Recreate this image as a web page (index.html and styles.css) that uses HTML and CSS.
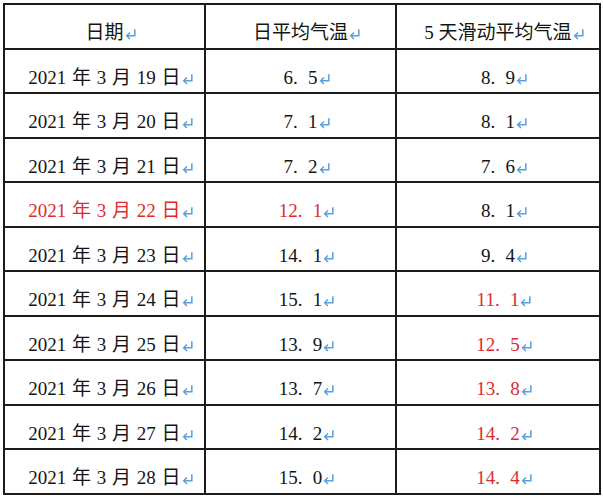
FILE: index.html
```html
<!DOCTYPE html>
<html lang="zh">
<head>
<meta charset="utf-8">
<link rel="stylesheet" href="styles.css">
</head>
<body>
<table class="data">
  <colgroup><col class="c1"><col class="c2"><col class="c3"></colgroup>
  <tr><td>日期<span class="mark"><svg viewBox="0 0 12 12"><path d="M10 2V8H2.5M5.5 5L2.5 8L5.5 11"/></svg></span></td><td>日平均气温<span class="mark"><svg viewBox="0 0 12 12"><path d="M10 2V8H2.5M5.5 5L2.5 8L5.5 11"/></svg></span></td><td>5 天滑动平均气温<span class="mark"><svg viewBox="0 0 12 12"><path d="M10 2V8H2.5M5.5 5L2.5 8L5.5 11"/></svg></span></td></tr>
  <tr><td class="date">2021 年 3 月 19 日<span class="mark"><svg viewBox="0 0 12 12"><path d="M10 2V8H2.5M5.5 5L2.5 8L5.5 11"/></svg></span></td><td>6<span class="pt">.</span>5<span class="mark"><svg viewBox="0 0 12 12"><path d="M10 2V8H2.5M5.5 5L2.5 8L5.5 11"/></svg></span></td><td>8<span class="pt">.</span>9<span class="mark"><svg viewBox="0 0 12 12"><path d="M10 2V8H2.5M5.5 5L2.5 8L5.5 11"/></svg></span></td></tr>
  <tr><td class="date">2021 年 3 月 20 日<span class="mark"><svg viewBox="0 0 12 12"><path d="M10 2V8H2.5M5.5 5L2.5 8L5.5 11"/></svg></span></td><td>7<span class="pt">.</span>1<span class="mark"><svg viewBox="0 0 12 12"><path d="M10 2V8H2.5M5.5 5L2.5 8L5.5 11"/></svg></span></td><td>8<span class="pt">.</span>1<span class="mark"><svg viewBox="0 0 12 12"><path d="M10 2V8H2.5M5.5 5L2.5 8L5.5 11"/></svg></span></td></tr>
  <tr><td class="date">2021 年 3 月 21 日<span class="mark"><svg viewBox="0 0 12 12"><path d="M10 2V8H2.5M5.5 5L2.5 8L5.5 11"/></svg></span></td><td>7<span class="pt">.</span>2<span class="mark"><svg viewBox="0 0 12 12"><path d="M10 2V8H2.5M5.5 5L2.5 8L5.5 11"/></svg></span></td><td>7<span class="pt">.</span>6<span class="mark"><svg viewBox="0 0 12 12"><path d="M10 2V8H2.5M5.5 5L2.5 8L5.5 11"/></svg></span></td></tr>
  <tr><td class="date red">2021 年 3 月 22 日<span class="mark"><svg viewBox="0 0 12 12"><path d="M10 2V8H2.5M5.5 5L2.5 8L5.5 11"/></svg></span></td><td class="red">12<span class="pt">.</span>1<span class="mark"><svg viewBox="0 0 12 12"><path d="M10 2V8H2.5M5.5 5L2.5 8L5.5 11"/></svg></span></td><td>8<span class="pt">.</span>1<span class="mark"><svg viewBox="0 0 12 12"><path d="M10 2V8H2.5M5.5 5L2.5 8L5.5 11"/></svg></span></td></tr>
  <tr><td class="date">2021 年 3 月 23 日<span class="mark"><svg viewBox="0 0 12 12"><path d="M10 2V8H2.5M5.5 5L2.5 8L5.5 11"/></svg></span></td><td>14<span class="pt">.</span>1<span class="mark"><svg viewBox="0 0 12 12"><path d="M10 2V8H2.5M5.5 5L2.5 8L5.5 11"/></svg></span></td><td>9<span class="pt">.</span>4<span class="mark"><svg viewBox="0 0 12 12"><path d="M10 2V8H2.5M5.5 5L2.5 8L5.5 11"/></svg></span></td></tr>
  <tr><td class="date">2021 年 3 月 24 日<span class="mark"><svg viewBox="0 0 12 12"><path d="M10 2V8H2.5M5.5 5L2.5 8L5.5 11"/></svg></span></td><td>15<span class="pt">.</span>1<span class="mark"><svg viewBox="0 0 12 12"><path d="M10 2V8H2.5M5.5 5L2.5 8L5.5 11"/></svg></span></td><td class="red">11<span class="pt">.</span>1<span class="mark"><svg viewBox="0 0 12 12"><path d="M10 2V8H2.5M5.5 5L2.5 8L5.5 11"/></svg></span></td></tr>
  <tr><td class="date">2021 年 3 月 25 日<span class="mark"><svg viewBox="0 0 12 12"><path d="M10 2V8H2.5M5.5 5L2.5 8L5.5 11"/></svg></span></td><td>13<span class="pt">.</span>9<span class="mark"><svg viewBox="0 0 12 12"><path d="M10 2V8H2.5M5.5 5L2.5 8L5.5 11"/></svg></span></td><td class="red">12<span class="pt">.</span>5<span class="mark"><svg viewBox="0 0 12 12"><path d="M10 2V8H2.5M5.5 5L2.5 8L5.5 11"/></svg></span></td></tr>
  <tr><td class="date">2021 年 3 月 26 日<span class="mark"><svg viewBox="0 0 12 12"><path d="M10 2V8H2.5M5.5 5L2.5 8L5.5 11"/></svg></span></td><td>13<span class="pt">.</span>7<span class="mark"><svg viewBox="0 0 12 12"><path d="M10 2V8H2.5M5.5 5L2.5 8L5.5 11"/></svg></span></td><td class="red">13<span class="pt">.</span>8<span class="mark"><svg viewBox="0 0 12 12"><path d="M10 2V8H2.5M5.5 5L2.5 8L5.5 11"/></svg></span></td></tr>
  <tr><td class="date">2021 年 3 月 27 日<span class="mark"><svg viewBox="0 0 12 12"><path d="M10 2V8H2.5M5.5 5L2.5 8L5.5 11"/></svg></span></td><td>14<span class="pt">.</span>2<span class="mark"><svg viewBox="0 0 12 12"><path d="M10 2V8H2.5M5.5 5L2.5 8L5.5 11"/></svg></span></td><td class="red">14<span class="pt">.</span>2<span class="mark"><svg viewBox="0 0 12 12"><path d="M10 2V8H2.5M5.5 5L2.5 8L5.5 11"/></svg></span></td></tr>
  <tr><td class="date">2021 年 3 月 28 日<span class="mark"><svg viewBox="0 0 12 12"><path d="M10 2V8H2.5M5.5 5L2.5 8L5.5 11"/></svg></span></td><td>15<span class="pt">.</span>0<span class="mark"><svg viewBox="0 0 12 12"><path d="M10 2V8H2.5M5.5 5L2.5 8L5.5 11"/></svg></span></td><td class="red">14<span class="pt">.</span>4<span class="mark"><svg viewBox="0 0 12 12"><path d="M10 2V8H2.5M5.5 5L2.5 8L5.5 11"/></svg></span></td></tr>
</table>
</body>
</html>
```
FILE: styles.css
```css
html, body {
  margin: 0;
  padding: 0;
  background: #ffffff;
}
body {
  padding: 3px 0 0 3px;
  font-family: "Liberation Serif", "Noto Sans CJK SC", serif;
  font-size: 19px;
  color: #141414;
}
.data {
  border-collapse: collapse;
  table-layout: fixed;
  width: 596px;
}
.c1 { width: 201px; }
.c2 { width: 191px; }
.c3 { width: 204px; }
.data td {
  border: 2px solid #1c1c1c;
  height: 44.5px;
  box-sizing: border-box;
  padding: 14px 0 0 0;
  text-align: center;
  vertical-align: middle;
  white-space: nowrap;
  line-height: 28px;
}
.date { word-spacing: 1px; }
.red { color: #de2b2f; }
.pt {
  display: inline-block;
  width: 4px;
  margin-right: 11px;
}
.mark {
  display: inline-block;
  width: 13px;
  margin-right: -13px;
  vertical-align: -1px;
}
.mark svg {
  display: block;
  width: 13px;
  height: 13px;
  fill: none;
  stroke: #5b9fdb;
  stroke-width: 1.4;
}
```
